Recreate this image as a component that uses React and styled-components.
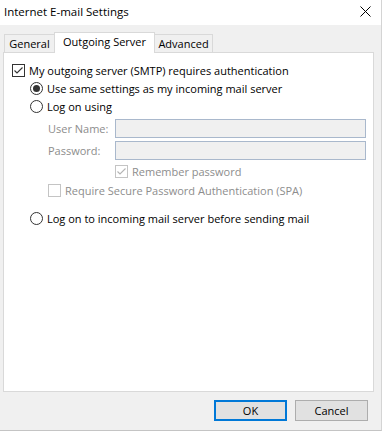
import React from "react";
import styled, { createGlobalStyle } from "styled-components";

const GlobalStyle = createGlobalStyle`
  html, body { margin: 0; padding: 0; background: #ffffff; }
  body { font-family: "Open Sans", "Noto Sans", sans-serif; font-size: 11px; color: #000; }
  * { box-sizing: border-box; }
`;

const Window = styled.div`
  width: 382px;
  height: 431px;
  background: #f0f0f0;
  border-right: 1px solid #d4d4d4;
  border-bottom: 1px solid #c4c4c4;
  display: flex;
  flex-direction: column;
`;

const TitleBar = styled.div`
  height: 25px;
  background: #ffffff;
  display: flex;
  align-items: center;
  justify-content: space-between;
  padding: 0 10px 3px 4px;
  font-size: 11.5px;
`;

const CloseIcon = () => (
  <svg width="11" height="11" viewBox="0 0 11 11">
    <path d="M0.5 0.5 L10.5 10.5 M10.5 0.5 L0.5 10.5" stroke="#000" strokeWidth="1" fill="none" />
  </svg>
);

const Body = styled.div`
  flex: 1;
  display: flex;
  flex-direction: column;
  padding: 7px 7px 0 3px;
`;

const TabStrip = styled.div`
  display: flex;
  align-items: flex-end;
  height: 20px;
  padding-left: 1px;
`;

const Tab = styled.div`
  position: relative;
  height: ${(p) => (p.$active ? "21px" : "18px")};
  margin-bottom: ${(p) => (p.$active ? "-1px" : "0")};
  margin-left: -1px;
  width: ${(p) => p.$w}px;
  background: ${(p) => (p.$active ? "#ffffff" : "#f0f0f0")};
  border: 1px solid #d9d9d9;
  border-bottom: none;
  z-index: ${(p) => (p.$active ? 2 : 1)};
  display: flex;
  justify-content: center;
  padding-top: 1px;
  line-height: 15px;
  &:first-child { margin-left: 0; }
`;

const Panel = styled.div`
  height: 340px;
  background: #ffffff;
  border: 1px solid #d9d9d9;
  display: flex;
  flex-direction: column;
  padding: 8px 0 0 8px;
`;

const Row = styled.div`
  display: flex;
  align-items: center;
  height: ${(p) => p.$h || 17}px;
  margin-top: ${(p) => p.$mt || 0}px;
  margin-left: ${(p) => p.$indent || 0}px;
  color: ${(p) => (p.$disabled ? "#8d8d8d" : "#000")};
`;

const Label = styled.span`
  margin-left: ${(p) => p.$gap || 4}px;
  white-space: nowrap;
  line-height: 15px;
`;

const FieldLabel = styled.span`
  width: 67px;
  color: #8d8d8d;
  white-space: nowrap;
`;

const Input = styled.div`
  width: 251px;
  height: 19px;
  background: #f0f0f0;
  border: 1px solid #a9b8cc;
`;

const Box = styled.span`
  width: 13px;
  height: 13px;
  flex: none;
  border: 1px solid ${(p) => (p.$disabled ? "#c4c4c4" : "#333333")};
  background: #ffffff;
  display: flex;
  align-items: center;
  justify-content: center;
`;

const Circle = styled.span`
  width: 13px;
  height: 13px;
  flex: none;
  border-radius: 50%;
  border: 1px solid #333333;
  background: #ffffff;
  display: flex;
  align-items: center;
  justify-content: center;
  &::after {
    content: "";
    display: ${(p) => (p.$on ? "block" : "none")};
    width: 7px;
    height: 7px;
    border-radius: 50%;
    background: #333333;
  }
`;

const Checkbox = ({ checked, disabled }) => (
  <Box $disabled={disabled}>
    {checked && (
      <svg width="11" height="11" viewBox="0 0 11 11">
        <path d="M1.5 5.5 L4 8 L9.5 2.5" stroke={disabled ? "#b4b4b4" : "#333"} strokeWidth="1.1" fill="none" />
      </svg>
    )}
  </Box>
);

const Footer = styled.div`
  display: flex;
  justify-content: flex-end;
  gap: 8px;
  padding: 8px 6px 0 0;
`;

const Button = styled.button`
  width: ${(p) => p.$w}px;
  height: 21px;
  background: #e1e1e1;
  border: ${(p) => (p.$default ? "2px solid #0078d7" : "1px solid #adadad")};
  font-family: inherit;
  font-size: 11px;
  color: #000;
  padding: 0;
  display: flex;
  align-items: center;
  justify-content: center;
`;

export default function App() {
  return (
    <>
      <GlobalStyle />
      <Window>
        <TitleBar>
          <span>Internet E-mail Settings</span>
          <CloseIcon />
        </TitleBar>
        <Body>
          <TabStrip>
            <Tab $w={51}>General</Tab>
            <Tab $w={101} $active>Outgoing Server</Tab>
            <Tab $w={59}>Advanced</Tab>
          </TabStrip>
          <Panel>
            <Row $mt={1}>
              <Checkbox checked />
              <Label>My outgoing server (SMTP) requires authentication</Label>
            </Row>
            <Row $mt={1} $indent={18}>
              <Circle $on />
              <Label>Use same settings as my incoming mail server</Label>
            </Row>
            <Row $mt={1} $indent={18}>
              <Circle />
              <Label>Log on using</Label>
            </Row>
            <Row $mt={4} $indent={36} $h={19}>
              <FieldLabel>User Name:</FieldLabel>
              <Input />
            </Row>
            <Row $mt={3} $indent={36} $h={19}>
              <FieldLabel>Password:</FieldLabel>
              <Input />
            </Row>
            <Row $mt={3} $indent={103} $disabled>
              <Checkbox checked disabled />
              <Label>Remember password</Label>
            </Row>
            <Row $mt={2} $indent={36} $disabled>
              <Checkbox disabled />
              <Label>Require Secure Password Authentication (SPA)</Label>
            </Row>
            <Row $mt={11} $indent={18}>
              <Circle />
              <Label>Log on to incoming mail server before sending mail</Label>
            </Row>
          </Panel>
          <Footer>
            <Button $w={73} $default>OK</Button>
            <Button $w={73}>Cancel</Button>
          </Footer>
        </Body>
      </Window>
    </>
  );
}
